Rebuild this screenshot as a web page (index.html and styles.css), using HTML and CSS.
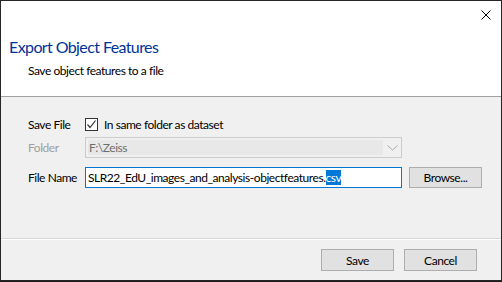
FILE: index.html
```html
<!DOCTYPE html>
<html lang="en">
<head>
    <meta charset="UTF-8">
    <title>Export Object Features</title>
    <link rel="stylesheet" href="styles.css">
</head>
<body>
    <div class="window">
        <div class="header">
            <button class="close" aria-label="Close">
                <svg width="10" height="10" viewBox="0 0 10 10"><path d="M0.5 0.5 L9.5 9.5 M9.5 0.5 L0.5 9.5" stroke="#000" stroke-width="1" fill="none"/></svg>
            </button>
            <h1>Export Object Features</h1>
            <p class="subtitle">Save object features to a file</p>
        </div>

        <div class="content">
            <div class="row row-save">
                <span class="label">Save File</span>
                <label class="check">
                    <span class="box">
                        <svg width="11" height="11" viewBox="0 0 11 11"><path d="M1.5 5.5 L4 8.5 L9.5 1.5" stroke="#333" stroke-width="1.2" fill="none"/></svg>
                    </span>
                    In same folder as dataset
                </label>
            </div>
            <div class="row row-folder">
                <span class="label disabled">Folder</span>
                <div class="combo">
                    <span class="combo-field">F:\Zeiss</span>
                    <span class="combo-arrow">
                        <svg width="11" height="6" viewBox="0 0 11 6"><path d="M0.5 0.5 L5.5 5 L10.5 0.5" stroke="#a8a8a8" stroke-width="1" fill="none"/></svg>
                    </span>
                </div>
            </div>
            <div class="row row-file">
                <span class="label">File Name</span>
                <div class="textbox">SLR22_EdU_images_and_analysis-objectfeatures.<span class="sel">csv</span></div>
                <button class="btn">Browse...</button>
            </div>
        </div>

        <div class="footer">
            <button class="btn">Save</button>
            <button class="btn">Cancel</button>
        </div>
    </div>
</body>
</html>
```

FILE: styles.css
```css
html, body {
    margin: 0;
    padding: 0;
    background-color: #1b1b1b;
}

body {
    font-family: Lato, 'Open Sans', sans-serif;
    font-size: 12px;
    letter-spacing: -0.45px;
    color: #000;
}

.window {
    width: 502px;
    height: 281px;
    box-sizing: border-box;
    border: 1px solid #262626;
    background-color: #f0f0f0;
    display: flex;
    flex-direction: column;
}

.header {
    position: relative;
    background-color: #fff;
    height: 96px;
    box-sizing: border-box;
    border-bottom: 1px solid #a0a0a0;
    padding: 36px 0 0 8px;
}

.close {
    position: absolute;
    top: 9px;
    right: 10px;
    border: none;
    background: none;
    padding: 0;
    width: 10px;
    height: 10px;
    line-height: 0;
}

h1 {
    margin: 0;
    font-size: 16px;
    line-height: 20px;
    letter-spacing: -0.6px;
    font-weight: normal;
    color: #003399;
}

.subtitle {
    margin: 6px 0 0 19px;
    line-height: 16px;
}

.content {
    flex: 1;
    padding: 19px 0 0 27px;
}

.row {
    display: flex;
    align-items: center;
}

.label {
    width: 57px;
    flex-shrink: 0;
}

.label.disabled {
    color: #a0a0a0;
}

.row-save {
    height: 16px;
}

.row-folder {
    margin-top: 5px;
}

.row-file {
    margin-top: 9px;
}

.check {
    display: flex;
    align-items: center;
    gap: 6px;
}

.box {
    width: 13px;
    height: 13px;
    box-sizing: border-box;
    border: 1px solid #333;
    background-color: #fff;
    display: flex;
    align-items: center;
    justify-content: center;
}

.combo {
    width: 317px;
    height: 21px;
    box-sizing: border-box;
    border: 1px solid #cccccc;
    padding: 2px 0 2px 2px;
    display: flex;
}

.combo-field {
    flex: 1;
    background-color: #e8e8e8;
    color: #6d6d6d;
    padding-left: 1px;
    line-height: 15px;
}

.combo-arrow {
    width: 18px;
    display: flex;
    align-items: center;
    justify-content: center;
}

.textbox {
    width: 317px;
    height: 21px;
    box-sizing: border-box;
    border: 1px solid #0078d7;
    background-color: #fff;
    padding: 0 0 0 2px;
    line-height: 19px;
    white-space: nowrap;
    overflow: hidden;
}

.sel {
    background-color: #0078d7;
    color: #fff;
}

.btn {
    font-family: inherit;
    font-size: 12px;
    letter-spacing: inherit;
    width: 73px;
    height: 22px;
    padding: 0;
    box-sizing: border-box;
    border: 1px solid #adadad;
    background-color: #e1e1e1;
    color: #000;
}

.row-file .btn {
    margin-left: 7px;
    height: 21px;
}

.footer {
    border-top: 1px solid #d5d5d5;
    box-shadow: inset 0 1px 0 #fff;
    height: 42px;
    box-sizing: border-box;
    display: flex;
    justify-content: flex-end;
    align-items: flex-start;
    gap: 10px;
    padding: 10px 24px 0 0;
}
```
